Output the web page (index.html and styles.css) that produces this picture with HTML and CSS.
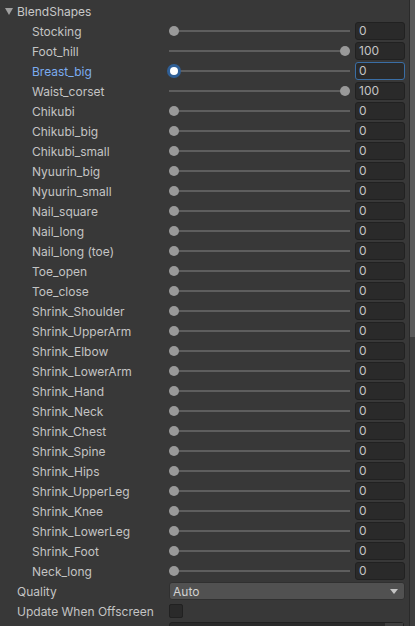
FILE: index.html
```html
<!DOCTYPE html>
<html>
<head>
<meta charset="utf-8">
<link rel="stylesheet" href="styles.css">
</head>
<body>
<div class="panel">
  <div class="content">
    <div class="row header"><span class="tri"></span><span class="hlabel">BlendShapes</span></div>
    <div id="rows"></div>
    <div class="row">
      <span class="label top">Quality</span>
      <div class="dropdown"><span>Auto</span><span class="arrow"></span></div>
    </div>
    <div class="row">
      <span class="label top">Update When Offscreen</span>
      <div class="check"></div>
    </div>
    <div class="row last">
      <span class="label top"></span>
      <div class="objfield"><span class="objbtn"></span></div>
    </div>
  </div>
  <div class="scrollbar"><div class="thumb"></div></div>
</div>
<script src="app.js"></script>
</body>
</html>
```
FILE: app.js
```js
const data = [
  ["Stocking",0],["Foot_hill",100],["Breast_big",0,true],["Waist_corset",100],
  ["Chikubi",0],["Chikubi_big",0],["Chikubi_small",0],["Nyuurin_big",0],["Nyuurin_small",0],
  ["Nail_square",0],["Nail_long",0],["Nail_long (toe)",0],["Toe_open",0],["Toe_close",0],
  ["Shrink_Shoulder",0],["Shrink_UpperArm",0],["Shrink_Elbow",0],["Shrink_LowerArm",0],
  ["Shrink_Hand",0],["Shrink_Neck",0],["Shrink_Chest",0],["Shrink_Spine",0],["Shrink_Hips",0],
  ["Shrink_UpperLeg",0],["Shrink_Knee",0],["Shrink_LowerLeg",0],["Shrink_Foot",0],["Neck_long",0]
];
const host = document.getElementById("rows");
for (const [name, val, focus] of data) {
  const r = document.createElement("div");
  r.className = "row" + (focus ? " focus" : "");
  r.innerHTML = `<span class="label">${name}</span>
    <div class="slider"><div class="track"></div><div class="knob" style="--v:${val / 100}"></div></div>
    <div class="num">${val}</div>`;
  host.appendChild(r);
}
```
FILE: styles.css
```css
html, body { margin: 0; padding: 0; background: #383838; }
body { font-family: Inter, "Noto Sans", sans-serif; font-size: 12px; color: #c4c4c4; overflow: hidden; }
.panel { display: flex; width: 415px; height: 626px; overflow: hidden; }
.content { flex: 1; padding-top: 1px; }
.row { display: flex; align-items: center; height: 20px; }
.header { padding-left: 5px; }
.tri { width: 0; height: 0; border-left: 4px solid transparent; border-right: 4px solid transparent; border-top: 7px solid #a0a0a0; margin-right: 4px; margin-top: 1px; }
.hlabel { color: #c8c8c8; }
.label { width: 137px; padding-left: 32px; flex: none; white-space: nowrap; }
.label.top { padding-left: 17px; width: 152px; }
.focus .label { color: #7bacef; }
.slider { position: relative; width: 181px; height: 20px; flex: none; }
.track { position: absolute; left: 0; right: 0; top: 9px; height: 2px; background: #5e5e5e; }
.knob { position: absolute; top: 5px; left: calc((100% - 10px) * var(--v)); margin-left: 0; width: 10px; height: 10px; border-radius: 50%; background: #999; }
.focus .knob { background: #fff; width: 8px; height: 8px; top: 6px; margin-left: 1px; box-shadow: 0 0 0 3px #2f5f96; }
.num { margin-left: 5px; height: 16px; line-height: 16px; background: #2a2a2a; border: 1px solid #212121; border-radius: 3px; padding-left: 3px; width: 45px; }
.focus .num { border-color: #3a6ea5; }
.dropdown { height: 16px; background: #515151; border: 1px solid #303030; border-radius: 3px; display: flex; align-items: center; justify-content: space-between; padding: 0 3px; color: #d2d2d2; width: 228px; }
.arrow { width: 0; height: 0; border-left: 4px solid transparent; border-right: 4px solid transparent; border-top: 5px solid #c4c4c4; margin-right: 3px; }
.check { width: 12px; height: 12px; background: #2a2a2a; border: 1px solid #212121; border-radius: 2px; }
.row.last { align-items: flex-start; }
.objfield { width: 233px; height: 18px; background: #2a2a2a; border: 1px solid #212121; border-radius: 3px; margin-top: 1px; display: flex; justify-content: flex-end; }
.objbtn { width: 18px; background: #3f3f3f; }
.scrollbar { width: 5px; border-left: 1px solid #2a2a2a; background: #3e3e3e; flex: none; }
.thumb { height: 337px; background: #5a5a5a; }
```
